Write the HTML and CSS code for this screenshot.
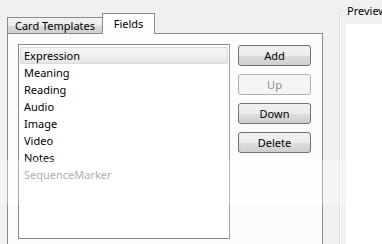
FILE: index.html
```html
<!DOCTYPE html>
<html><head>
<meta charset="utf-8">
<title>Fields</title>
<link rel="stylesheet" href="styles.css">
</head>
<body>
<div class="dialog">
	<div class="tabs">
		<div class="tabbar">
			<div class="tab">Card Templates</div>
			<div class="tab current">Fields</div>
		</div>
		<div class="pane">
			<div class="fieldlist">
				<div class="item selected">Expression</div>
				<div class="item">Meaning</div>
				<div class="item">Reading</div>
				<div class="item">Audio</div>
				<div class="item">Image</div>
				<div class="item">Video</div>
				<div class="item">Notes</div>
				<div class="item muted">SequenceMarker</div>
			</div>
			<div class="buttons">
				<button class="btn">Add</button>
				<button class="btn" disabled>Up</button>
				<button class="btn">Down</button>
				<button class="btn">Delete</button>
			</div>
		</div>
	</div>
	<fieldset class="preview">
		<legend>Preview</legend>
		<div class="previewbox"></div>
	</fieldset>
</div>
<div class="watermark"></div>
</body>
</html>
```

FILE: styles.css
```css
body {
    margin: 0;
    background: #f0f0f0;
    font-family: "Segoe UI", "Noto Sans", sans-serif;
    font-size: 11px;
    color: #000;
    overflow: hidden;
}
.dialog {
    display: flex;
    align-items: flex-start;
}
.tabs {
    margin: 13px 0 0 7px;
    width: 316px;
    flex: none;
}
.tabbar {
    display: flex;
    align-items: flex-end;
    height: 20px;
}
.tab {
    width: 96px;
    height: 16px;
    line-height: 16px;
    text-align: center;
    border: 1px solid #898c95;
    border-bottom: none;
    background: linear-gradient(#f2f2f2, #ebebeb 50%, #dddddd 51%, #cfcfcf);
    box-sizing: border-box;
}
.tab.current {
    width: 53px;
    height: 21px;
    line-height: 19px;
    margin-left: -1px;
    margin-bottom: -1px;
    background: #fff;
    position: relative;
    z-index: 2;
}
.pane {
    display: flex;
    align-items: flex-start;
    height: 230px;
    padding: 10px;
    border: 1px solid #898c95;
    background: #fcfcfc;
    box-sizing: border-box;
}
.fieldlist {
    width: 212px;
    height: 195px;
    padding: 2px 1px;
    border: 1px solid #828790;
    border-right-color: #a0a0a0;
    background: #fff;
    box-sizing: border-box;
}
.item {
    height: 17px;
    line-height: 15px;
    padding-left: 3px;
    border: 1px solid transparent;
    box-sizing: border-box;
}
.item.selected {
    border-color: #d9d9d9;
    border-radius: 2px;
    background: linear-gradient(#f6f6f6, #e6e6e6);
}
.item.muted { color: #8d8d8d; }
.buttons {
    display: flex;
    flex-direction: column;
    gap: 8px;
    margin: 1px 0 0 8px;
}
.btn {
    width: 73px;
    height: 21px;
    padding: 0;
    font: inherit;
    color: #000;
    border: 1px solid #707070;
    border-radius: 3px;
    background: linear-gradient(#f2f2f2, #ebebeb 50%, #dddddd 51%, #cfcfcf);
}
.btn:disabled {
    color: #8f8f8f;
    border-color: #adb2b5;
    background: #f4f4f4;
}
.preview {
    margin: 3px 0 0 16px;
    padding: 0;
    min-width: 0;
    border: 1px solid #d5dfe5;
    border-right: none;
    border-radius: 3px 0 0 0;
    box-shadow: inset 1px 1px #fff;
    flex: 1;
    height: 260px;
}
.preview legend {
    margin-left: 6px;
    padding: 0 1px;
    line-height: 16px;
}
.previewbox {
    margin: 5px 0 0 5px;
    height: 240px;
    background: #fff;
    border-left: 1px solid #f4f4f4;
}
.watermark {
    position: absolute;
    left: 0;
    top: 160px;
    width: 346px;
    height: 45px;
    background: rgba(255, 255, 255, 0.3);
}
```
